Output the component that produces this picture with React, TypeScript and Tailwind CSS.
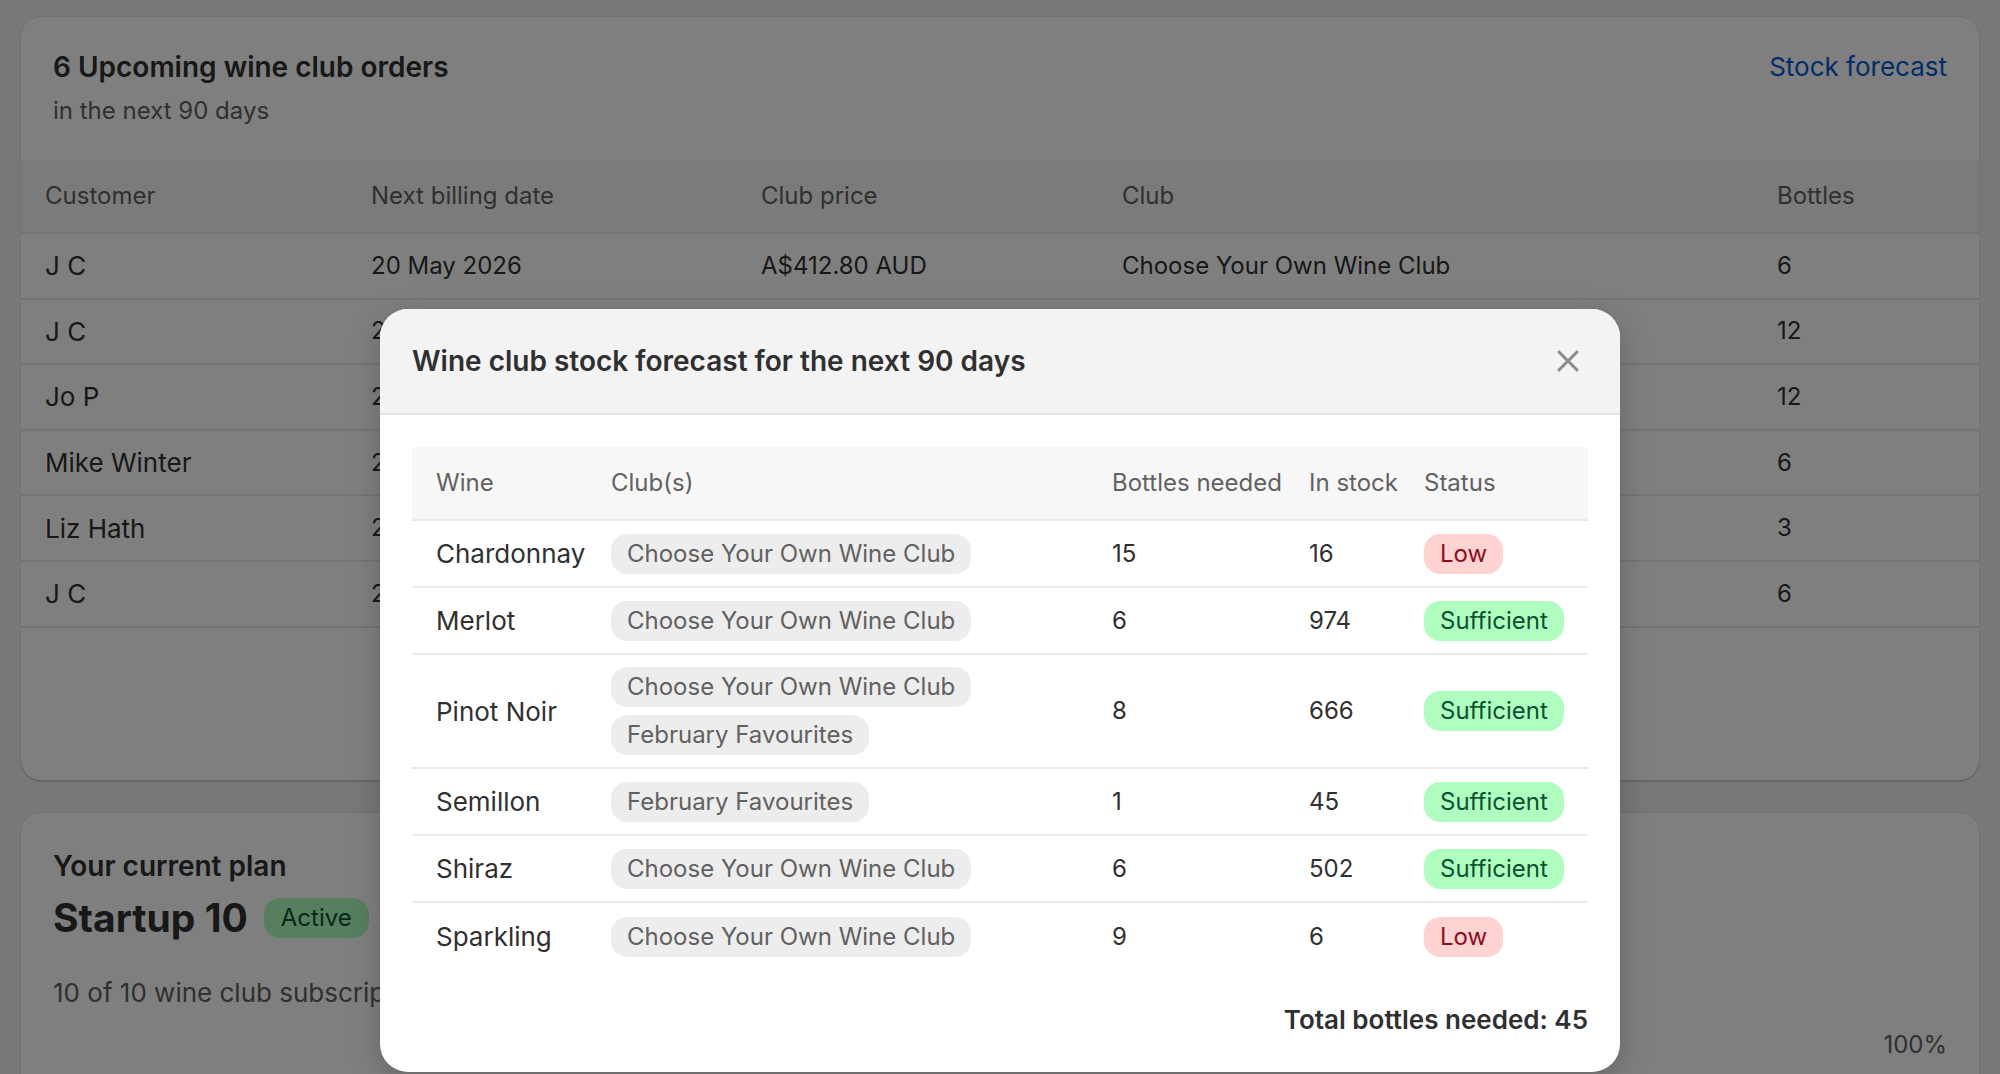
import React from "react";

const orders = [
  { name: "J C", date: "20 May 2026", price: "A$412.80 AUD", club: "Choose Your Own Wine Club", bottles: "6" },
  { name: "J C", date: "22 May 2026", price: "A$825.60 AUD", club: "Choose Your Own Wine Club", bottles: "12" },
  { name: "Jo P", date: "27 May 2026", price: "A$825.60 AUD", club: "Choose Your Own Wine Club", bottles: "12" },
  { name: "Mike Winter", date: "2 Jun 2026", price: "A$412.80 AUD", club: "February Favourites", bottles: "6" },
  { name: "Liz Hath", date: "24 Jun 2026", price: "A$206.40 AUD", club: "February Favourites", bottles: "3" },
  { name: "J C", date: "20 Jun 2026", price: "A$412.80 AUD", club: "Choose Your Own Wine Club", bottles: "6" },
];

type Wine = { wine: string; clubs: string[]; needed: string; stock: string; low: boolean };

const wines: Wine[] = [
  { wine: "Chardonnay", clubs: ["Choose Your Own Wine Club"], needed: "15", stock: "16", low: true },
  { wine: "Merlot", clubs: ["Choose Your Own Wine Club"], needed: "6", stock: "974", low: false },
  { wine: "Pinot Noir", clubs: ["Choose Your Own Wine Club", "February Favourites"], needed: "8", stock: "666", low: false },
  { wine: "Semillon", clubs: ["February Favourites"], needed: "1", stock: "45", low: false },
  { wine: "Shiraz", clubs: ["Choose Your Own Wine Club"], needed: "6", stock: "502", low: false },
  { wine: "Sparkling", clubs: ["Choose Your Own Wine Club"], needed: "9", stock: "6", low: true },
];

function Chip({ label }: { label: string }) {
  return (
    <span className="inline-flex h-[40px] items-center rounded-[16px] bg-[#ededed] px-[16px] text-[24px] leading-none text-[#616161]">
      {label}
    </span>
  );
}

function Badge({ low }: { low: boolean }) {
  return low ? (
    <span className="inline-flex h-[40px] items-center rounded-[16px] bg-[#fed3d1] px-[16px] text-[24px] leading-none text-[#8e0b21]">
      Low
    </span>
  ) : (
    <span className="inline-flex h-[40px] items-center rounded-[16px] bg-[#affebf] px-[16px] text-[24px] leading-none text-[#0c5132]">
      Sufficient
    </span>
  );
}

export default function App() {
  return (
    <div className="relative h-[1074px] w-[2000px] overflow-hidden bg-[#f1f1f1] font-['Inter',sans-serif] text-[#303030]">
      <div className="flex flex-col gap-[33px] px-[21px] pt-[17px]">
        {/* Card 1 */}
        <div className="h-[763px] overflow-hidden rounded-[20px] bg-white shadow-[0_2px_0_rgba(0,0,0,0.12),0_0_0_1px_rgba(0,0,0,0.07)]">
          <div className="flex items-start justify-between px-[32px] pb-[29px] pt-[30px]">
            <div className="flex flex-col gap-[4px]">
              <div className="text-[28px] font-semibold leading-[40px]">6 Upcoming wine club orders</div>
              <div className="text-[24px] leading-[40px] text-[#616161]">in the next 90 days</div>
            </div>
            <div className="text-[26px] leading-[40px] text-[#005bd3]">Stock forecast</div>
          </div>
          <div className="grid h-[74px] grid-cols-[334px_390px_361px_655px_1fr] items-center border-b-2 border-[#ebebeb] bg-[#f7f7f7] text-[24px] text-[#616161]">
            <div className="pl-[24px]">Customer</div>
            <div className="pl-[16px]">Next billing date</div>
            <div className="pl-[16px]">Club price</div>
            <div className="pl-[16px]">Club</div>
            <div className="pl-[16px]">Bottles</div>
          </div>
          {orders.map((o, i) => (
            <div
              key={i}
              className="grid h-[65.6px] grid-cols-[334px_390px_361px_655px_1fr] items-center border-b-2 border-[#ebebeb] text-[24px]"
            >
              <div className="pl-[24px] text-[26px]">{o.name}</div>
              <div className="pl-[16px]">{o.date}</div>
              <div className="pl-[16px]">{o.price}</div>
              <div className="pl-[16px]">{o.club}</div>
              <div className="pl-[16px]">{o.bottles}</div>
            </div>
          ))}
        </div>

        {/* Card 2 */}
        <div className="h-[400px] rounded-[20px] bg-white px-[32px] pt-[33px] shadow-[0_2px_0_rgba(0,0,0,0.12),0_0_0_1px_rgba(0,0,0,0.07)]">
          <div className="text-[28px] font-semibold leading-[40px]">Your current plan</div>
          <div className="mt-[8px] flex items-center gap-[16px]">
            <span className="text-[39px] font-bold leading-[48px]">Startup 10</span>
            <span className="inline-flex h-[40px] items-center rounded-[16px] bg-[#affebf] px-[17px] text-[24px] leading-none text-[#0c5132]">
              Active
            </span>
          </div>
          <div className="mt-[31px] text-[26px] leading-[40px] text-[#616161]">10 of 10 wine club subscriptions used</div>
          <div className="mt-[12px] flex justify-end text-[24px] leading-[40px] text-[#616161]">100%</div>
        </div>
      </div>

      {/* Overlay */}
      <div className="absolute inset-0 bg-black/50" />

      {/* Modal */}
      <div className="absolute left-[380px] top-[309px] w-[1240px] overflow-hidden rounded-[28px] bg-white shadow-[0_8px_32px_rgba(0,0,0,0.2)]">
        <div className="flex items-center justify-between border-b-2 border-[#e3e3e3] bg-[#f3f3f3] px-[32px] py-[32px]">
          <div className="text-[28px] font-semibold leading-[40px]">Wine club stock forecast for the next 90 days</div>
          <button className="flex h-[40px] w-[40px] items-center justify-center">
            <svg viewBox="0 0 20 20" width="40" height="40" fill="#8a8a8a">
              <path d="M13.97 15.03a.75.75 0 1 0 1.06-1.06l-3.97-3.97 3.97-3.97a.75.75 0 0 0-1.06-1.06l-3.97 3.970-3.97-3.97a.75.75 0 0 0-1.06 1.06l3.97 3.97-3.97 3.97a.75.75 0 1 0 1.06 1.06l3.97-3.97 3.97 3.97Z" />
            </svg>
          </button>
        </div>
        <div className="px-[32px] pb-[32px] pt-[32px]">
          <div className="grid h-[74px] grid-cols-[187px_501px_197px_115px_176px] items-center border-b-2 border-[#ebebeb] bg-[#f7f7f7] text-[24px] text-[#616161]">
            <div className="pl-[24px]">Wine</div>
            <div className="pl-[12px]">Club(s)</div>
            <div className="pl-[12px]">Bottles needed</div>
            <div className="pl-[12px]">In stock</div>
            <div className="pl-[12px]">Status</div>
          </div>
          {wines.map((w, i) => (
            <div
              key={w.wine}
              className={
                "grid min-h-[67px] grid-cols-[187px_501px_197px_115px_176px] items-center py-[12px] text-[24px] " +
                (i < wines.length - 1 ? "border-b-2 border-[#ebebeb]" : "")
              }
            >
              <div className="pl-[24px] text-[26px]">{w.wine}</div>
              <div className="flex flex-col items-start gap-[8px] pl-[12px]">
                {w.clubs.map((c) => (
                  <Chip key={c} label={c} />
                ))}
              </div>
              <div className="pl-[12px]">{w.needed}</div>
              <div className="pl-[12px]">{w.stock}</div>
              <div className="flex pl-[12px]">
                <Badge low={w.low} />
              </div>
            </div>
          ))}
          <div className="mt-[30px] text-right text-[26px] font-semibold leading-[40px]">Total bottles needed: 45</div>
        </div>
      </div>
    </div>
  );
}
